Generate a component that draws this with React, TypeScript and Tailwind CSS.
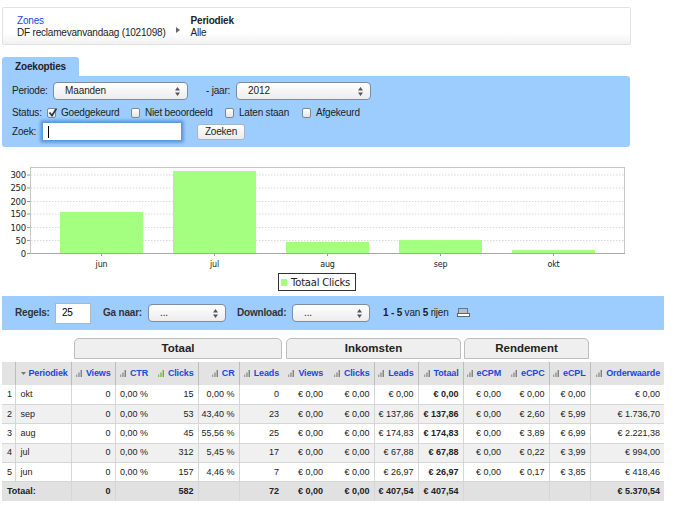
import React from "react"

const font = "font-['Liberation_Sans',Arial,sans-serif]"

// width of every column and whether it has a line on its right side
const cols: { w: string; line: boolean }[] = [
  { w: "w-[13px]", line: true },
  { w: "w-[56px]", line: true },
  { w: "w-[44px]", line: true },
  { w: "w-[37px]", line: false },
  { w: "w-[46px]", line: true },
  { w: "w-[41px]", line: true },
  { w: "w-[44px]", line: false },
  { w: "w-[44px]", line: false },
  { w: "w-[47px]", line: true },
  { w: "w-[44px]", line: true },
  { w: "w-[45px]", line: true },
  { w: "w-[42px]", line: false },
  { w: "w-[44px]", line: true },
  { w: "w-[41px]", line: true },
  { w: "w-[74px]", line: false },
]

const headers = ["", "Periodiek", "Views", "CTR", "Clicks", "CR", "Leads", "Views", "Clicks", "Leads", "Totaal", "eCPM", "eCPC", "eCPL", "Orderwaarde"]

const rows = [
  ["1", "okt", "0", "0,00 %", "15", "0,00 %", "0", "€ 0,00", "€ 0,00", "€ 0,00", "€ 0,00", "€ 0,00", "€ 0,00", "€ 0,00", "€ 0,00"],
  ["2", "sep", "0", "0,00 %", "53", "43,40 %", "23", "€ 0,00", "€ 0,00", "€ 137,86", "€ 137,86", "€ 0,00", "€ 2,60", "€ 5,99", "€ 1.736,70"],
  ["3", "aug", "0", "0,00 %", "45", "55,56 %", "25", "€ 0,00", "€ 0,00", "€ 174,83", "€ 174,83", "€ 0,00", "€ 3,89", "€ 6,99", "€ 2.221,38"],
  ["4", "jul", "0", "0,00 %", "312", "5,45 %", "17", "€ 0,00", "€ 0,00", "€ 67,88", "€ 67,88", "€ 0,00", "€ 0,22", "€ 3,99", "€ 994,00"],
  ["5", "jun", "0", "0,00 %", "157", "4,46 %", "7", "€ 0,00", "€ 0,00", "€ 26,97", "€ 26,97", "€ 0,00", "€ 0,17", "€ 3,85", "€ 418,46"],
]

const totals = ["0", "", "582", "", "72", "€ 0,00", "€ 0,00", "€ 407,54", "€ 407,54", "", "", "", "€ 5.370,54"]

const bars = [
  { label: "jun", x: 60, top: 212 },
  { label: "jul", x: 173, top: 171 },
  { label: "aug", x: 286, top: 242 },
  { label: "sep", x: 399, top: 240 },
  { label: "okt", x: 512, top: 250 },
]

const ticks = [
  { label: "300", y: 175 },
  { label: "250", y: 188 },
  { label: "200", y: 201.5 },
  { label: "150", y: 214 },
  { label: "100", y: 227.5 },
  { label: "50", y: 240.5 },
  { label: "0", y: 253.5 },
]

const Arrows = () => (
  <svg width="7" height="11" viewBox="0 0 7 11" className="shrink-0">
    <path d="M3.5 1 L6 4.5 L1 4.5 Z" fill="#555" />
    <path d="M3.5 10 L6 6.5 L1 6.5 Z" fill="#555" />
  </svg>
)

const Select = ({ value, className }: { value: string; className: string }) => (
  <div className={`flex items-center justify-between h-[18px] rounded-[4px] border border-[#7d8ca3] bg-gradient-to-b from-white to-[#ececec] text-[10px] tracking-[-0.1px] text-[#222] ${className}`}>
    <span>{value}</span>
    <Arrows />
  </div>
)

const Check = ({ label, checked, className }: { label: string; checked?: boolean; className: string }) => (
  <div className={`flex items-center ${className}`}>
    <span className="relative w-[9px] h-[10px] rounded-[2px] border border-[#7f8794] bg-gradient-to-b from-white to-[#e4e4e4]">
      {checked && (
        <svg width="11" height="11" viewBox="0 0 11 11" className="absolute -top-[2px] left-0">
          <path d="M1.5 5.5 L4 8.5 L8.5 1.5" stroke="#2a3442" strokeWidth="1.7" fill="none" />
        </svg>
      )}
    </span>
    <span className="ml-[5px]">{label}</span>
  </div>
)

const SortIcon = ({ active }: { active?: boolean }) => (
  <svg width="6" height="7" viewBox="0 0 6 7" className="inline-block mr-[4px] align-[-0.5px]">
    <rect x="0" y="4.5" width="1.3" height="2.5" fill={active ? "#7fc93f" : "#a0a0a0"} />
    <rect x="2.3" y="2.5" width="1.3" height="4.5" fill={active ? "#6dbb2d" : "#8a8a8a"} />
    <rect x="4.6" y="0" width="1.3" height="7" fill={active ? "#5fae20" : "#777"} />
  </svg>
)

const PrinterIcon = () => (
  <svg width="13" height="9" viewBox="0 0 13 9" className="ml-[8px] -mt-[1px]">
    <rect x="1.5" y="0.5" width="9" height="5" fill="#b4c0cc" stroke="#6d747e" />
    <rect x="0.5" y="5.5" width="12" height="3" fill="#ffffff" stroke="#5f6670" />
  </svg>
)

const Chart = () => (
  <svg width="660" height="139" viewBox="0 155 660 139" className="block">
    <rect x="30.5" y="167.5" width="594" height="86" fill="white" stroke="#c8c8c8" />
    {ticks.map((t) => (
      <g key={t.label}>
        {t.label !== "0" && <line x1="31" x2="624" y1={t.y} y2={t.y} stroke="#d8d8d8" strokeDasharray="1.5 1.5" />}
        <line x1="27" x2="30" y1={t.y} y2={t.y} stroke="#999" />
        <text x="26" y={t.y + 3} textAnchor="end" fontSize="8.5" fill="#222" fontFamily="DejaVu Sans">
          {t.label}
        </text>
      </g>
    ))}
    {bars.map((b) => (
      <g key={b.label}>
        <rect x={b.x} y={b.top} width="83" height={253.5 - b.top} fill="#a4ff80" />
        <line x1={b.x + 41.5} x2={b.x + 41.5} y1="254" y2="256" stroke="#999" />
        <text x={b.x + 41.5} y="267" textAnchor="middle" fontSize="8" fill="#222" fontFamily="DejaVu Sans">
          {b.label}
        </text>
      </g>
    ))}
    <line x1="30" x2="625" y1="253.5" y2="253.5" stroke="#a8a8a8" />
    <rect x="278.5" y="273.5" width="77" height="17" fill="white" stroke="#333" />
    <rect x="281" y="279" width="6" height="7" fill="#a4ff80" />
    <text x="291" y="286" fontSize="10" fill="#222" fontFamily="DejaVu Sans">
      Totaal Clicks
    </text>
  </svg>
)

const Tab = ({ label, className }: { label: string; className: string }) => (
  <div className={`h-[21px] flex items-center justify-center rounded-t-[5px] border border-[#bdbdbd] bg-[#efefef] text-[11.5px] font-bold text-[#222] tracking-normal ${className}`}>
    {label}
  </div>
)

const App = () => {
  return (
    <div className={`w-[684px] h-[506px] overflow-hidden bg-white pt-[7px] text-[10px] tracking-[-0.2px] leading-none text-[#222] ${font}`}>
      <div className="ml-[2px] w-[629px] h-[38px] flex border border-[#e2e2e2] rounded-[2px] bg-gradient-to-b from-white from-70% to-[#f1f1f1] pl-[14px] pt-[7px]">
        <div className="leading-[12px]">
          <div className="text-[#1a47e0]">Zones</div>
          <div>DF reclamevanvandaag (1021098)</div>
        </div>
        <svg width="4" height="6" viewBox="0 0 4 6" className="ml-[10px] mt-[12px]">
          <path d="M0 0 L4 3 L0 6 Z" fill="#666" />
        </svg>
        <div className="ml-[11px] leading-[12px]">
          <div className="font-bold">Periodiek</div>
          <div>Alle</div>
        </div>
      </div>

      <div className="mt-[12px] ml-[2px] w-[77px] h-[19px] rounded-t-[3px] bg-[#9dcdff] flex items-center justify-center font-bold">
        Zoekopties
      </div>
      <div className="ml-[2px] w-[628px] h-[71px] rounded-b-[3px] rounded-tr-[3px] bg-[#9dcdff] pl-[10px] pt-[6px] flex flex-col">
        <div className="flex items-center">
          <span className="w-[41px]">Periode:</span>
          <Select value="Maanden" className="w-[135px] pl-[11px] pr-[6px]" />
          <span className="ml-[18px] w-[30px]">- jaar:</span>
          <Select value="2012" className="w-[135px] pl-[11px] pr-[6px]" />
        </div>
        <div className="flex items-center mt-[7px] h-[12px]">
          <span className="w-[35px]">Status:</span>
          <Check checked label="Goedgekeurd" className="w-[84px]" />
          <Check label="Niet beoordeeld" className="w-[94px]" />
          <Check label="Laten staan" className="w-[77px]" />
          <Check label="Afgekeurd" className="" />
        </div>
        <div className="flex items-center mt-[3px]">
          <span className="w-[30px]">Zoek:</span>
          <div className="w-[140px] h-[19px] bg-white border border-[#5c9bd6] rounded-[1px] shadow-[0_0_3px_2px_rgba(70,130,210,0.65)] flex items-center pl-[5px]">
            <span className="w-px h-[12px] bg-black" />
          </div>
          <div className="ml-[15px] w-[48px] h-[16px] rounded-[3px] border border-[#a9b4c2] bg-gradient-to-b from-white to-[#ebebeb] flex items-center justify-center">
            Zoeken
          </div>
        </div>
      </div>

      <div className="mt-[8px]">
        <Chart />
      </div>

      <div className="mt-[2px] ml-[2px] w-[662px] h-[34px] bg-[#9dcdff] flex items-center pl-[13px]">
        <span className="font-bold text-[#333] w-[40px]">Regels:</span>
        <div className="w-[36px] h-[21px] bg-white border border-[#b5b5b5] flex items-center pl-[6px] text-black">25</div>
        <span className="ml-[12px] w-[45px] font-bold text-[#333]">Ga naar:</span>
        <Select value="..." className="w-[78px] pl-[11px] pr-[6px]" />
        <span className="ml-[11px] w-[55px] font-bold text-[#333]">Download:</span>
        <Select value="..." className="w-[78px] pl-[11px] pr-[6px]" />
        <span className="ml-[13px]">
          <b>1 - 5</b> van <b>5</b> rijen
        </span>
        <PrinterIcon />
      </div>

      <div className="mt-[8px] flex ml-[74px]">
        <Tab label="Totaal" className="w-[208px]" />
        <Tab label="Inkomsten" className="ml-[4px] w-[175px]" />
        <Tab label="Rendement" className="ml-[3px] w-[125px]" />
      </div>

      <table className="mt-[3px] ml-[2px] w-[662px] table-fixed text-[9px] tracking-normal">
        <colgroup>
          {cols.map((c, i) => (
            <col key={i} className={c.w} />
          ))}
        </colgroup>
        <thead>
          <tr className="h-[23px] bg-[#e3e3e3]">
            {headers.map((h, i) => (
              <th key={i} className={`font-bold text-[#1a47e0] tracking-[-0.15px] whitespace-nowrap pr-[4px] text-right ${cols[i].line ? "border-r border-[#bcbcbc]" : ""} ${i === 1 ? "!pl-[5px] !pr-0 !text-left" : ""}`}>
                {i === 1 && (
                  <svg width="5" height="3" viewBox="0 0 5 3" className="inline-block mr-[3px] align-[1px]">
                    <path d="M0 0 L5 0 L2.5 3 Z" fill="#777" />
                  </svg>
                )}
                {i > 1 && <SortIcon active={h === "Clicks" && i === 4} />}
                {h}
              </th>
            ))}
          </tr>
        </thead>
        <tbody>
          {rows.map((r, ri) => (
            <tr key={r[0]} className={`h-[19.4px] border-b border-[#d6d6d6] ${ri % 2 === 1 ? "bg-[#f0f0f0]" : "bg-white"}`}>
              {r.map((v, i) => (
                <td key={i} className={`${i < 2 ? "pl-[5px] text-left" : "pr-[4px] text-right"} ${cols[i].line ? "border-r border-[#d6d6d6]" : ""} ${i === 10 ? "font-bold" : ""}`}>
                  {v}
                </td>
              ))}
            </tr>
          ))}
          <tr className="h-[19.4px] bg-[#e1e1e1] font-bold">
            <td colSpan={2} className="pl-[5px] border-r border-[#d6d6d6]">Totaal:</td>
            {totals.map((v, i) => (
              <td key={i} className={`pr-[4px] text-right ${cols[i + 2].line ? "border-r border-[#d6d6d6]" : ""}`}>
                {v}
              </td>
            ))}
          </tr>
        </tbody>
      </table>
    </div>
  )
}

export default App
